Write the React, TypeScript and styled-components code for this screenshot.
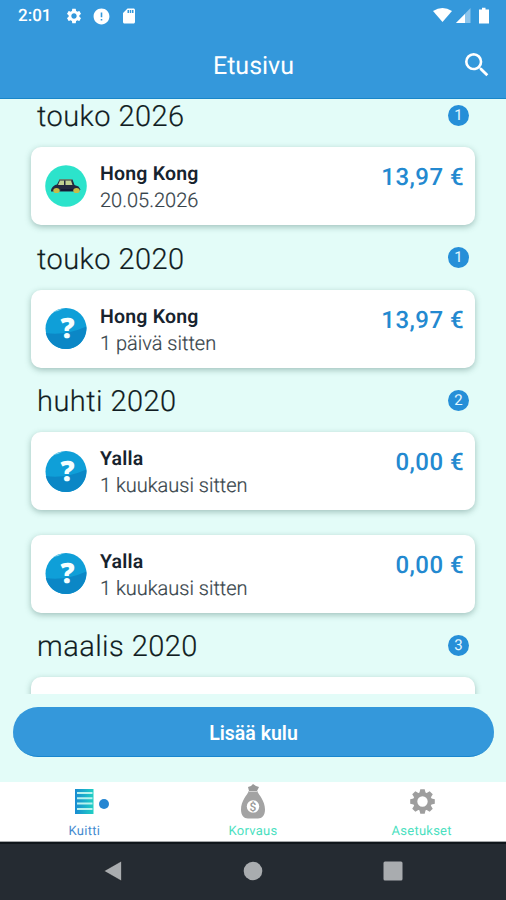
import React from 'react';
import styled, { createGlobalStyle } from 'styled-components';
import { MdSettings, MdError, MdSdCard, MdSearch } from 'react-icons/md';

const GlobalStyle = createGlobalStyle`
  * { box-sizing: border-box; }
  body { margin: 0; background: #e3fcf8; font-family: Roboto, sans-serif; text-rendering: geometricPrecision; }
`;

const Screen = styled.div`
  width: 506px;
  height: 900px;
  display: flex;
  flex-direction: column;
  overflow: hidden;
  background: #e3fcf8;
`;

const Header = styled.header`
  height: 99px;
  flex: none;
  background: #3498db;
  border-bottom: 1px solid #1886c9;
  color: #fff;
`;

const StatusBar = styled.div`
  height: 32px;
  display: flex;
  align-items: center;
  justify-content: space-between;
  padding: 0 13px 0 18px;
`;

const StatusGroup = styled.div<{ $gap: number }>`
  display: flex;
  align-items: center;
  gap: ${(p) => p.$gap}px;
  svg { display: block; }
`;

const Clock = styled.span`
  width: 37px;
  font-size: 17px;
  font-weight: 500;
  white-space: nowrap;
`;

const TitleBar = styled.div`
  height: 66px;
  display: grid;
  grid-template-columns: 46px 1fr 46px;
  align-items: center;
  svg { display: block; }
`;

const Title = styled.h1`
  margin: 0;
  padding: 3px 0 0 1px;
  text-align: center;
  font-size: 25px;
  font-weight: 400;
  line-height: 30px;
`;

const SearchButton = styled.button`
  border: 0;
  padding: 0 0 0 1px;
  background: none;
  color: #fff;
`;

const List = styled.main`
  height: 595px;
  flex: none;
  overflow: hidden;
  padding: 0 31px;
`;

const Section = styled.section<{ $first?: boolean }>`
  margin-top: ${(p) => (p.$first ? -16.5 : 0)}px;
`;

const SectionHeader = styled.div`
  height: 64.5px;
  display: flex;
  align-items: center;
  justify-content: space-between;
  padding: 5px 6px 0 6px;
`;

const Month = styled.h2`
  margin: 0;
  font-size: 29px;
  font-weight: 300;
  line-height: 34px;
  letter-spacing: 0.45px;
  color: #101c22;
  -webkit-text-stroke: 0.2px #101c22;
`;

const Count = styled.span`
  width: 21px;
  height: 21px;
  margin-top: -4px;
  border-radius: 50%;
  background: #268fd8;
  color: #e6f8ff;
  font-size: 15px;
  line-height: 21px;
  text-align: center;
`;

const Cards = styled.div`
  display: flex;
  flex-direction: column;
  gap: 24.5px;
`;

const Card = styled.article`
  height: 78px;
  display: flex;
  padding: 0 11px 0 14px;
  border-radius: 10px;
  background: #fff;
  box-shadow: 0 2px 6px rgba(40, 90, 80, 0.36);
`;

const Avatar = styled.div`
  width: 42px;
  height: 42px;
  margin: 17.5px 13px 0 0;
  svg { display: block; }
`;

const Details = styled.div`
  flex: 1;
  padding-top: 13px;
`;

const Name = styled.div`
  font-size: 19.5px;
  font-weight: 600;
  line-height: 27px;
  letter-spacing: 0.2px;
  color: #17232e;
`;

const When = styled.div`
  font-size: 20px;
  font-weight: 300;
  line-height: 27px;
  color: #36434a;
  -webkit-text-stroke: 0.2px #36434a;
`;

const Price = styled.div`
  padding-top: 14px;
  font-size: 24px;
  font-weight: 500;
  line-height: 32px;
  letter-spacing: 0.45px;
  color: #2389d0;
`;

const Footer = styled.div`
  height: 88px;
  flex: none;
  padding: 13px 12px 0 13px;
`;

const AddButton = styled.button`
  display: block;
  width: 100%;
  height: 50px;
  border: 0;
  border-bottom: 1px solid #1886cf;
  border-radius: 25px;
  padding: 3px 0 0;
  background: #3498db;
  color: #fff;
  font: 600 19.5px Roboto, sans-serif;
`;

const Tabs = styled.nav`
  height: 60px;
  flex: none;
  display: grid;
  grid-template-columns: repeat(3, 1fr);
  background: #fff;
`;

const Tab = styled.div<{ $active?: boolean }>`
  display: flex;
  flex-direction: column;
  align-items: center;
  color: ${(p) => (p.$active ? '#458bd0' : '#4cdfbf')};
  font-size: 13px;
  line-height: 16px;
  letter-spacing: 0.25px;
`;

const TabIcon = styled.div`
  position: relative;
  height: 42px;
  svg { display: block; }
`;

const Dot = styled.span`
  position: absolute;
  left: 24.5px;
  top: 17px;
  width: 10px;
  height: 10px;
  border-radius: 50%;
  background: #2586d2;
`;

const SystemNav = styled.div`
  flex: 1;
  display: flex;
  align-items: center;
  justify-content: center;
  gap: 120px;
  padding-bottom: 3px;
  border-top: 2px solid #10161b;
  background: #252b32;
  box-shadow: 0 -1px 0 #a4a7a9;
  svg { display: block; }
`;

const CarIcon = () => (
  <svg width="42" height="42" viewBox="0 0 42 42">
    <circle cx="21" cy="21" r="20.8" fill="#2ce3cb" />
    <path d="M6 26.500c0-4 3-6.500 6-7l2.500-5h13l2 5.500 4 1.500 2 3-2 2H9z" fill="#24283f" />
    <path d="M13 20l2-4.500h4V20zM20.500 15.500H26l1.500 4.500h-7z" fill="#c1cf91" />
    <path d="M14 14.800h13" stroke="#7d8468" strokeWidth="1" fill="none" />
    <ellipse cx="11.500" cy="25.500" rx="3.200" ry="2.600" fill="#c5bd48" />
    <ellipse cx="31.500" cy="25.500" rx="3.200" ry="2.600" fill="#c5bd48" />
    <path d="M16 25h12" stroke="#151a35" strokeWidth="2" />
  </svg>
);

const Mark = styled.text`
  font-family: 'Open Sans', sans-serif;
  font-size: 28px;
  font-weight: 800;
  fill: #f5ffff;
`;

const QuestionIcon = () => (
  <svg width="42" height="42" viewBox="0 0 42 42">
    <circle cx="21" cy="21.500" r="20.500" fill="#0f9fd8" />
    <path d="M.8 26Q20 29 41.400 19.500C42 32 33 42 21 42 11 42 2.500 35 .8 26z" fill="#0b87c6" />
    <path d="M8 5q4-3 10-3.500L13 4z" fill="#83d3ec" />
    <Mark x="22.500" y="31" textAnchor="middle">?</Mark>
  </svg>
);

const ReceiptIcon = () => (
  <svg width="20" height="41" viewBox="0 0 20 41">
    <defs>
      <linearGradient id="receipt" x1="0" x2="1" y1="0" y2="0">
        <stop offset="0" stopColor="#188bd2" />
        <stop offset="1" stopColor="#20d0c4" />
      </linearGradient>
    </defs>
    <path d="M1 7h18.500v25H1z" fill="url(#receipt)" />
    <path d="M3 11h15.500M3 16.300h15.500M3 21.600h15.500M3 27h15.500" stroke="#b9f2ef" strokeWidth="2" />
  </svg>
);

const Dollar = styled.text`
  font-family: Roboto, sans-serif;
  font-size: 12px;
  font-weight: 500;
  fill: #9a9a9a;
`;

const BagIcon = () => (
  <svg width="26" height="41" viewBox="0 0 26 41">
    <path d="M8 5l3-1 2-2 3 2 3 1-2 4H9z" fill="#999" />
    <path d="M9 9h8c2 4 8 10 8 18.500 0 6-3 9-7 9H8c-4 0-7-3-7-9C1 19 7 13 9 9z" fill="#a3a3a3" />
    <path d="M8 9.500h10" stroke="#d2d2d2" />
    <circle cx="13" cy="24.500" r="6.200" fill="#fff" />
    <Dollar x="13" y="28.700" textAnchor="middle">$</Dollar>
  </svg>
);

const teeth = [0, 45, 90, 135, 180, 225, 270, 315];

const GearIcon = () => (
  <svg width="26" height="41" viewBox="0 0 26 41">
    <g transform="translate(13.500 19.500)">
      {teeth.map((a) => (
        <path key={a} d="M-3.200-8l1-4.300h4.400l1 4.300z" fill="#9e9e9e" transform={`rotate(${a})`} />
      ))}
      <circle r="7.300" fill="none" stroke="#9e9e9e" strokeWidth="4.200" />
    </g>
  </svg>
);

type Expense = { name: string; when: string; price: string; car?: boolean };

const sections: { month: string; count: number; items: Expense[] }[] = [
  { month: 'touko 2026', count: 1, items: [{ name: 'Hong Kong', when: '20.05.2026', price: '13,97 €', car: true }] },
  { month: 'touko 2020', count: 1, items: [{ name: 'Hong Kong', when: '1 päivä sitten', price: '13,97 €' }] },
  {
    month: 'huhti 2020',
    count: 2,
    items: [
      { name: 'Yalla', when: '1 kuukausi sitten', price: '0,00 €' },
      { name: 'Yalla', when: '1 kuukausi sitten', price: '0,00 €' },
    ],
  },
  { month: 'maalis 2020', count: 3, items: [] },
];

export default function App() {
  return (
    <Screen>
      <GlobalStyle />
      <Header>
        <StatusBar>
          <StatusGroup $gap={10}>
            <Clock>2:01</Clock>
            <StatusGroup $gap={9}>
              <MdSettings size={18} />
              <MdError size={19} />
              <MdSdCard size={18} />
            </StatusGroup>
          </StatusGroup>
          <StatusGroup $gap={4}>
            <svg width="19" height="18" viewBox="0 0 19 18">
              <path d="M0 4q9.500-6 19 0L9.500 15z" fill="#fff" />
            </svg>
            <svg width="15" height="18" viewBox="0 0 15 18">
              <path d="M0 16L14.500 1v15z" fill="#8bc4ec" />
              <path d="M0 16l9-9v9z" fill="#fff" />
            </svg>
            <svg width="18" height="18" viewBox="0 0 18 18">
              <path d="M4 2.500h3V.8h3.500v1.700H14V16.500H4z" fill="#fff" />
            </svg>
          </StatusGroup>
        </StatusBar>
        <TitleBar>
          <span />
          <Title>Etusivu</Title>
          <SearchButton aria-label="Haku">
            <MdSearch size={32} />
          </SearchButton>
        </TitleBar>
      </Header>
      <List>
        {sections.map((s, i) => (
          <Section key={s.month} $first={i === 0}>
            <SectionHeader>
              <Month>{s.month}</Month>
              <Count>{s.count}</Count>
            </SectionHeader>
            <Cards>
              {s.items.map((e, j) => (
                <Card key={j}>
                  <Avatar>{e.car ? <CarIcon /> : <QuestionIcon />}</Avatar>
                  <Details>
                    <Name>{e.name}</Name>
                    <When>{e.when}</When>
                  </Details>
                  <Price>{e.price}</Price>
                </Card>
              ))}
              {s.items.length === 0 && <Card />}
            </Cards>
          </Section>
        ))}
      </List>
      <Footer>
        <AddButton>Lisää kulu</AddButton>
      </Footer>
      <Tabs>
        <Tab $active>
          <TabIcon>
            <ReceiptIcon />
            <Dot />
          </TabIcon>
          Kuitti
        </Tab>
        <Tab>
          <TabIcon>
            <BagIcon />
          </TabIcon>
          Korvaus
        </Tab>
        <Tab>
          <TabIcon>
            <GearIcon />
          </TabIcon>
          Asetukset
        </Tab>
      </Tabs>
      <SystemNav>
        <svg width="20" height="22" viewBox="0 0 20 22">
          <path d="M1 11L18.500 1v20z" fill="#a9acaf" stroke="#0d1115" strokeWidth=".5" />
        </svg>
        <svg width="20" height="20" viewBox="0 0 20 20">
          <circle cx="10" cy="10" r="9.300" fill="#a9acaf" />
        </svg>
        <svg width="20" height="20" viewBox="0 0 20 20">
          <rect x=".5" y=".5" width="19" height="19" rx="1.500" fill="#a9acaf" />
        </svg>
      </SystemNav>
    </Screen>
  );
}
